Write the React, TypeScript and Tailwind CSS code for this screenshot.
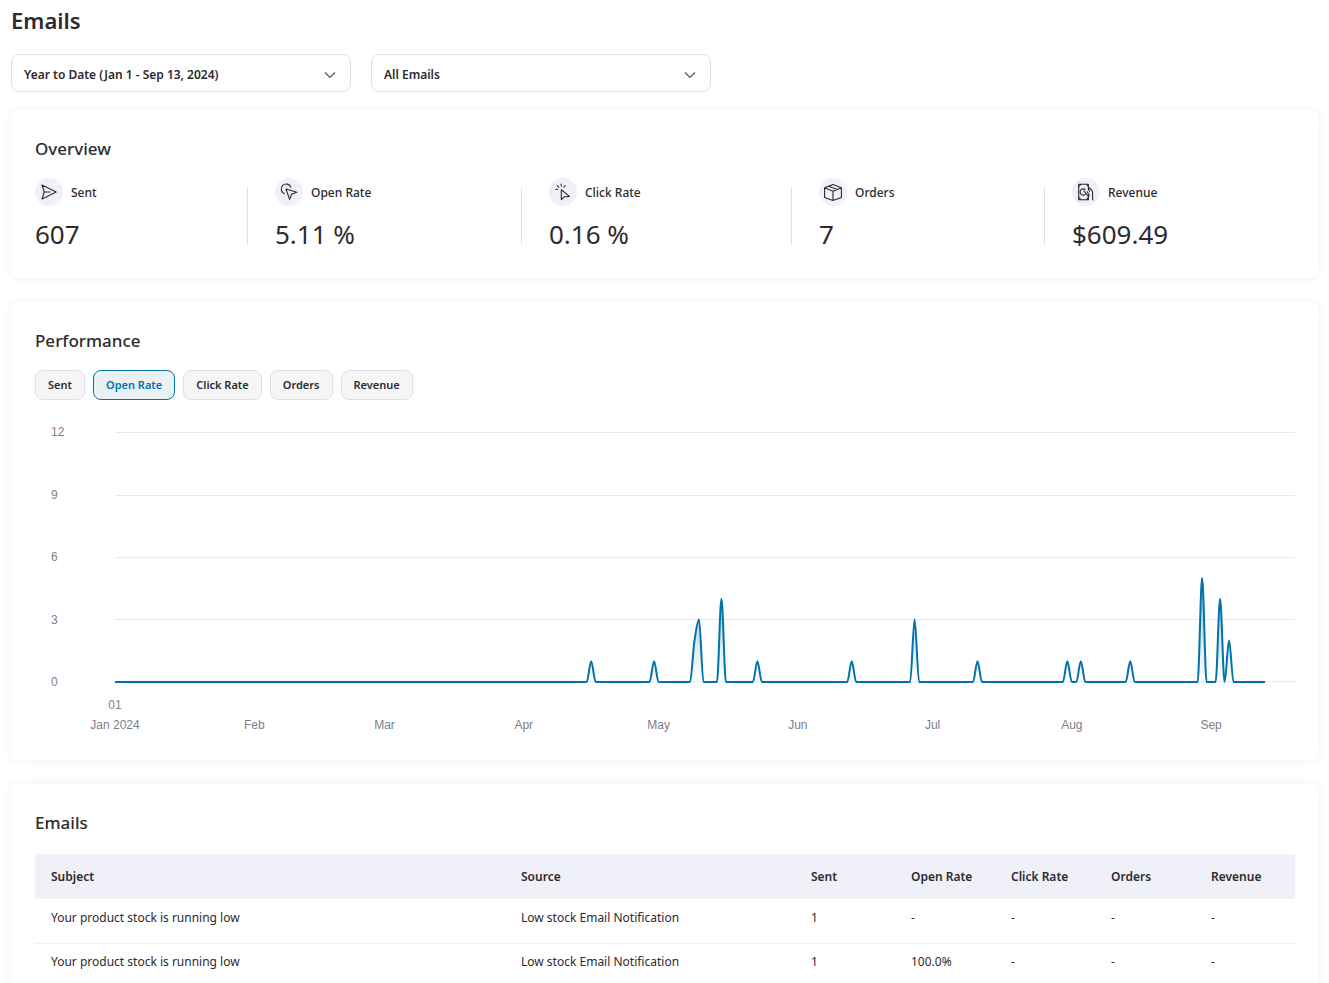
import { ReactNode, useState } from "react";

const stats: { label: string; value: string; icon: ReactNode }[] = [
    {
        label: "Sent",
        value: "607",
        icon: <path d="M7 7 21.2 14 7 21 9.3 14ZM9.3 14H15.5" />,
    },
    {
        label: "Open Rate",
        value: "5.11 %",
        icon: (
            <>
                <path d="M16 9.6A5 5 0 1 0 9.8 15.8" />
                <path d="M11 11 21.8 14.3 16.6 16.2 14.6 21.4Z" />
            </>
        ),
    },
    {
        label: "Click Rate",
        value: "0.16 %",
        icon: <path d="M12.3 11.8V21.7L15.3 18.8 20.5 18.4ZM6.3 11.3 9 11.5M8 7.4 10 9.5M12.2 5.8V8.4M16.4 7.3 14.6 9.4" />,
    },
    {
        label: "Orders",
        value: "7",
        icon: <path d="M14 6.6 22.4 9.8V19.4L14 22.6 5.6 19.4V9.8ZM5.6 9.8 14 13.2 22.4 9.8M14 13.2V22.6M9.8 8.2 18.2 11.5" />,
    },
    {
        label: "Revenue",
        value: "$609.49",
        icon: (
            <>
                <path d="M16.4 9.2V6.2H6.7V21.8H16.4V18" />
                <path d="M6.7 8.6 9 6.2M14.2 6.2 16.4 8.4M6.7 19.4 9 21.8M14.2 21.8 16.4 19.4" />
                <path d="M13.4 11.8A3.1 3.1 0 1 0 13.6 16" />
                <path d="M11.6 12.6 15.8 17.6C17.2 18.4 17.6 17.2 16.8 16.2L15 13.4M16.4 9.2 19.8 12 20.6 14.4V22.2M16.4 9.2V11.4L18 13.6" />
            </>
        ),
    },
];

const metrics = ["Sent", "Open Rate", "Click Rate", "Orders", "Revenue"];

const months = [
    { name: "Feb", day: 31 },
    { name: "Mar", day: 60 },
    { name: "Apr", day: 91 },
    { name: "May", day: 121 },
    { name: "Jun", day: 152 },
    { name: "Jul", day: 182 },
    { name: "Aug", day: 213 },
    { name: "Sep", day: 244 },
];

// day of the year (0 = Jan 1) -> value, all other days are 0
const points: Record<number, number> = {
    106: 1, 120: 1, 129: 2, 130: 3, 135: 4, 143: 1, 164: 1, 178: 3,
    192: 1, 212: 1, 215: 1, 226: 1, 242: 5, 246: 4, 248: 2,
};
const LAST_DAY = 256;

const toX = (day: number) => 80 + (day * 1150) / LAST_DAY;
const toY = (value: number) => 262 - value * 20.8;

// monotone cubic through every day
function buildLine() {
    const ys = Array.from({ length: LAST_DAY + 1 }, (_, i) => toY(points[i] || 0));
    const step = 1150 / LAST_DAY;
    const slope = (i: number) => {
        if(i <= 0 || i >= LAST_DAY) return 0;
        const a = (ys[i] - ys[i - 1]) / step;
        const b = (ys[i + 1] - ys[i]) / step;
        if(a * b <= 0) return 0;
        return (2 * a * b) / (a + b);
    };
    let d = `M${toX(0)} ${ys[0]}`;
    for(let i = 1; i <= LAST_DAY; i++) {
        const x0 = toX(i - 1);
        const x1 = toX(i);
        d += `C${x0 + step / 3} ${ys[i - 1] + (slope(i - 1) * step) / 3} ${x1 - step / 3} ${ys[i] - (slope(i) * step) / 3} ${x1} ${ys[i]}`;
    }
    return d;
}

const emails = [
    { subject: "Your product stock is running low", source: "Low stock Email Notification", values: ["1", "-", "-", "-", "-"] },
    { subject: "Your product stock is running low", source: "Low stock Email Notification", values: ["1", "100.0%", "-", "-", "-"] },
];

function Dropdown({ label, option }: { label: string; option: string }) {
    return(
        <div className="relative w-full max-w-[340px]">
            <select aria-label={label} className="w-full h-[38px] appearance-none rounded-lg border border-[#dfdfec] bg-white pl-3 pr-8 pt-1 text-xs font-semibold">
                <option>{option}</option>
            </select>
            <svg className="absolute right-[15px] top-[14px] pointer-events-none" width="12" height="12" viewBox="0 0 12 12" fill="none" stroke="#555" strokeWidth="1.1">
                <path d="M1 4.5 6 9.5 11 4.5" />
            </svg>
        </div>
    )
}

function Card({ title, children }: { title: string; children: ReactNode }) {
    return(
        <section className="rounded-lg bg-white p-6 shadow-[0_0_10px_rgba(40,40,70,0.07)]">
            <h2 className="pt-[3px] pb-px text-[17px] leading-6 font-medium">{title}</h2>
            {children}
        </section>
    )
}

function Chart() {
    const line = buildLine();
    return(
        <svg className="mt-5 block w-full" viewBox="0 0 1260 316" role="img" aria-label="Open rate by day">
            <defs>
                <linearGradient id="area" x1="0" y1="0" x2="0" y2="1">
                    <stop offset="0" stopColor="#0073aa" stopOpacity="0.4" />
                    <stop offset="1" stopColor="#0073aa" stopOpacity="0" />
                </linearGradient>
            </defs>
            <g className="font-['Liberation_Sans',sans-serif] text-xs" fill="#7e7e8a">
                {[12, 9, 6, 3, 0].map((value, i) => (
                    <g key={value}>
                        <line x1="80" x2="1260" y1={[12.5, 75.5, 137.5, 199.5, 261.5][i]} y2={[12.5, 75.5, 137.5, 199.5, 261.5][i]} stroke="#e9e9ed" />
                        <text x="16" y={[16, 79, 141, 204, 266][i]}>{value}</text>
                    </g>
                ))}
                <text x="80" y="289" textAnchor="middle">01</text>
                <text x="80" y="309" textAnchor="middle">Jan 2024</text>
                {months.map((month) => (
                    <text key={month.name} x={toX(month.day)} y="309" textAnchor="middle">{month.name}</text>
                ))}
            </g>
            <path d={`${line}L${toX(LAST_DAY)} 262L80 262Z`} fill="url(#area)" />
            <path d={line} fill="none" stroke="#0073aa" strokeWidth="2" strokeLinejoin="round" />
        </svg>
    )
}

export default function App() {

    const [metric, setMetric] = useState("Open Rate");

    return(
        <div className="h-screen overflow-hidden bg-white pl-[11px] pr-[10px] font-['Noto_Sans',sans-serif] text-[#2e2a2e]">
            <h1 className="pt-[2px] pb-[2px] text-[22px] leading-9 font-semibold">Emails</h1>
            <div className="mt-[14px] flex gap-5">
                <Dropdown label="Date range" option="Year to Date (Jan 1 - Sep 13, 2024)" />
                <Dropdown label="Email type" option="All Emails" />
            </div>
            <main className="mt-[18px] flex flex-col gap-6">
                <Card title="Overview">
                    <div className="mt-4 grid grid-cols-[240fr_274fr_270fr_253fr_223fr]">
                        {stats.map((stat, i) => (
                            <div key={stat.label} className="flex">
                                <div className="flex-1">
                                    <div className="flex items-center gap-2">
                                        <svg className="rounded-full bg-[#f0f0f9]" width="28" height="28" viewBox="0 0 28 28" fill="none" stroke="#2b2930" strokeWidth="1.1" strokeLinejoin="round">
                                            {stat.icon}
                                        </svg>
                                        <span className="pt-[2px] text-xs font-medium">{stat.label}</span>
                                    </div>
                                    <p className="mt-[10px] mb-[2px] text-[26px] leading-9">{stat.value}</p>
                                </div>
                                {i < stats.length - 1 && <div className="mt-[10px] mr-[27px] h-14 w-px bg-[#dfdfec]" />}
                            </div>
                        ))}
                    </div>
                </Card>
                <Card title="Performance">
                    <div className="mt-4 flex gap-2">
                        {metrics.map((name) => (
                            <button
                                key={name}
                                type="button"
                                aria-pressed={name === metric}
                                onClick={() => setMetric(name)}
                                className={`h-[30px] rounded-lg border px-3 text-[11px] font-semibold ${name === metric ? "border-[#0073aa] bg-[#e9f1f5] text-[#0073aa]" : "border-[#dfdfec] bg-[#f6f6f6]"}`}
                            >
                                {name}
                            </button>
                        ))}
                    </div>
                    <Chart />
                </Card>
                <Card title="Emails">
                    <table className="mt-[18px] w-full table-fixed text-left text-xs">
                        <thead>
                            <tr className="h-[45px] bg-[#f0f0f9]">
                                <th className="pl-4 font-semibold">Subject</th>
                                <th className="w-[290px] pl-4 font-semibold">Source</th>
                                <th className="w-[100px] pl-4 font-semibold">Sent</th>
                                <th className="w-[100px] pl-4 font-semibold">Open Rate</th>
                                <th className="w-[100px] pl-4 font-semibold">Click Rate</th>
                                <th className="w-[100px] pl-4 font-semibold">Orders</th>
                                <th className="w-[100px] pl-4 font-semibold">Revenue</th>
                            </tr>
                        </thead>
                        <tbody>
                            {emails.map((email, i) => (
                                <tr key={i} className="h-11 border-b border-[#f0f0f5]">
                                    <td className="pl-4 pb-[6px]">{email.subject}</td>
                                    <td className="pl-4 pb-[6px]">{email.source}</td>
                                    {email.values.map((value, j) => (
                                        <td key={j} className="pl-4 pb-[6px]">{value}</td>
                                    ))}
                                </tr>
                            ))}
                        </tbody>
                    </table>
                </Card>
            </main>
        </div>
    )
}
